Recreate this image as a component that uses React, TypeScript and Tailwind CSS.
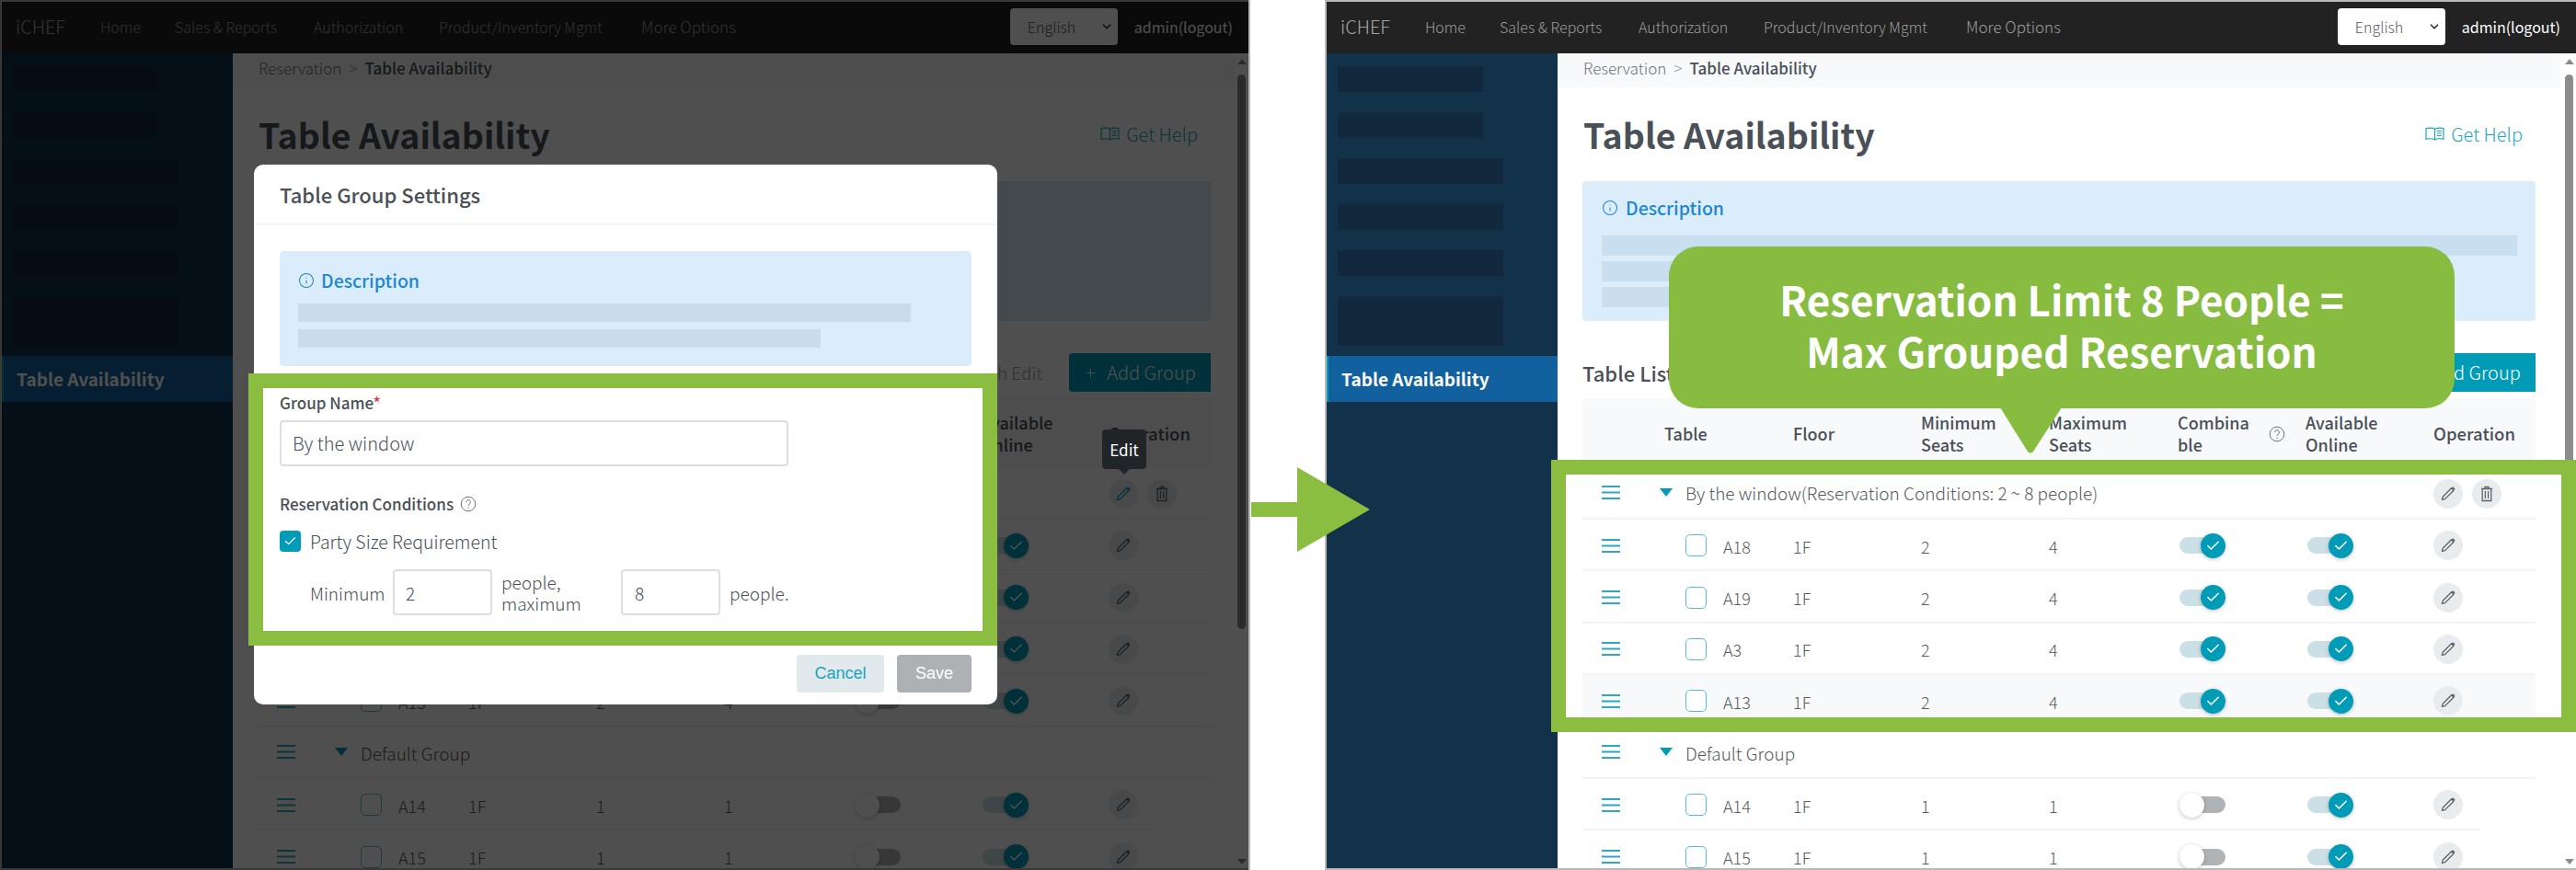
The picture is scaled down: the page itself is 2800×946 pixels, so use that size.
import { Check, ChevronDown, Info, Plus } from 'lucide-react'

const FONT = { fontFamily: '"Noto Sans CJK TC", "Noto Sans", sans-serif' }

const navItems = [
  { label: 'Home', width: 'w-[81px]' },
  { label: 'Sales & Reports', width: 'w-[151px]' },
  { label: 'Authorization', width: 'w-[136px]' },
  { label: 'Product/Inventory Mgmt', width: 'w-[220px]' },
]

const COLS = 'grid-cols-[112px_117px_139px_139px_140px_139px_139px_110px]'
const HEAD_COLS = 'grid-cols-[89px_140px_139px_139px_140px_139px_139px_110px]'

function DragIcon() {
  return (
    <svg width="20" height="15" viewBox="0 0 20 15" className="text-[#2fa8bf]">
      <path d="M0 1h20M0 7.500h20M0 14h20" stroke="currentColor" strokeWidth="2" />
    </svg>
  )
}

function PencilIcon({ active }: { active?: boolean }) {
  return (
    <svg width="18" height="18" viewBox="0 0 18 18" className={active ? 'text-[#0d9ab5]' : 'text-[#5f6368]'}>
      <path d="M3.200 12.200 12.600 2.800l2.400 2.400-9.400 9.400-3.200.8z" fill="none" stroke="currentColor" strokeWidth="1.300" strokeLinejoin="round" />
      <path d="M12.600 2.800l1.600-1.600 2.400 2.400L15 5.200z" fill="currentColor" />
    </svg>
  )
}

function TrashIcon() {
  return (
    <svg width="14" height="18" viewBox="0 0 14 18" className="text-[#5f6368]">
      <path d="M1 3.500h12M5 3.500V1.500h4v2M2.200 3.500v13h9.600v-13M5.400 6v8M8.600 6v8" fill="none" stroke="currentColor" strokeWidth="1.300" />
    </svg>
  )
}

function HelpCircle({ size = 18 }: { size?: number }) {
  return (
    <svg width={size} height={size} viewBox="0 0 18 18" className="text-[#6c757d]">
      <circle cx="9" cy="9" r="7.800" fill="none" stroke="currentColor" strokeWidth="1" />
      <path d="M6.600 7a2.400 2.400 0 1 1 3.600 2.100c-.8.5-1.200.9-1.200 1.900" fill="none" stroke="currentColor" strokeWidth="1" />
      <circle cx="9" cy="13.200" r=".7" fill="currentColor" />
    </svg>
  )
}

function BookIcon() {
  return (
    <svg width="21" height="16" viewBox="0 0 21 16" className="text-[#1ea7c0]">
      <path d="M10.500 2.500C8.500 1 4.500 1 1 1.600v11.600c3.500-.6 7.500-.6 9.500.8 2-1.400 6-1.400 9.500-.8V1.600C16.500 1 12.500 1 10.500 2.500zM10.500 2.500V14M12.800 4.500h5M12.800 7h5M12.800 9.500h5" fill="none" stroke="currentColor" strokeWidth="1.200" />
    </svg>
  )
}

function Toggle({ on }: { on: boolean }) {
  if (!on) {
    return (
      <div className="relative flex h-[27px] w-[50px] items-center">
        <div className="ml-[7px] h-[18px] w-[43px] rounded-full bg-[#b0b3b5]" />
        <div className="absolute left-0 top-0 h-[27px] w-[27px] rounded-full bg-white shadow-[0_1px_4px_rgba(0,0,0,0.25)]" />
      </div>
    )
  }
  return (
    <div className="relative flex h-[27px] w-[50px] items-center">
      <div className="h-[18px] w-[44px] rounded-full bg-[#cbe0e6]" />
      <div className="absolute right-0 top-0 flex h-[27px] w-[27px] items-center justify-center rounded-full bg-[#009cb7] shadow-[0_1px_4px_rgba(0,0,0,0.25)]">
        <Check size={17} strokeWidth={2.200} className="text-white" />
      </div>
    </div>
  )
}

function IconButton({ children }: { children: React.ReactNode }) {
  return <div className="flex h-[32px] w-[32px] items-center justify-center rounded-full bg-[#e9ecef]">{children}</div>
}

function GroupRow({ label, actions, activeEdit }: { label: string; actions?: boolean; activeEdit?: boolean }) {
  return (
    <div className="relative flex h-[56.400px] items-center border-b-2 border-[#f3f4f6] pl-[21px] text-[19px] font-light text-[#555b61]">
      <div className="w-[63px] leading-none"><DragIcon /></div>
      <div className="h-0 w-0 border-x-[7.500px] border-t-[9px] border-x-transparent border-t-[#009cb7]" />
      <span className={`ml-[14px] ${actions ? '' : 'pt-[3px]'}`}>{label}</span>
      {actions && (
        <div className="absolute left-[925px] top-[12px] flex gap-[10px]">
          <IconButton><PencilIcon active={activeEdit} /></IconButton>
          <IconButton><TrashIcon /></IconButton>
        </div>
      )}
    </div>
  )
}

function TableRow({ name, floor, min, max, combinable, hovered, short }: {
  name: string
  floor: string
  min: number
  max: number
  combinable: boolean
  hovered?: boolean
  short?: boolean
}) {
  return (
    <div className={`relative h-[56.400px] ${hovered ? 'bg-[#f8f9fa]' : ''}`}>
      <div className={`grid h-full ${COLS} items-center text-[18px] font-light text-[#555b61]`}>
        <div className="pl-[21px] leading-none"><DragIcon /></div>
        <div className="flex items-center">
          <div className="h-[24px] w-[23px] rounded-[5px] border-[1.500px] border-[#5cbccf] bg-white" />
          <span className="ml-[18px] pt-[2px]">{name}</span>
        </div>
        <span className="pt-[2px]">{floor}</span>
        <span className="pt-[2px]">{min}</span>
        <span className="pt-[2px]">{max}</span>
        <div className="pl-[2px]"><Toggle on={combinable} /></div>
        <div className="pl-[2px]"><Toggle on /></div>
        <div><IconButton><PencilIcon /></IconButton></div>
      </div>
      <div className={`absolute bottom-0 left-0 h-[2px] bg-[#f3f4f6] ${short ? 'w-[976px]' : 'w-full'}`} />
    </div>
  )
}

function Screen({ dimmed, children }: { dimmed?: boolean; children?: React.ReactNode }) {
  return (
    <div className="relative flex h-full flex-col overflow-hidden border-x-2 border-y-2 border-[#b9b9b9] border-r-0" style={FONT}>
      <header className="flex h-[56px] shrink-0 items-center bg-[#222222] pb-[3px] pl-[15px]">
        <span className="w-[92px] text-[20px] font-light text-[#a5a5a5]">iCHEF</span>
        {navItems.map(item => (
          <span key={item.label} className={`${item.width} text-[16px] font-light text-[#9d9d9d]`}>{item.label}</span>
        ))}
        <span className="text-[17px] font-light text-[#9d9d9d]">More Options</span>
        <div className="ml-auto flex items-center">
          <div className="flex h-[40px] w-[117px] items-center justify-between rounded-[4px] bg-white pl-[19px] pr-[5px] text-[16px] font-light text-[#555b61]">
            <span>English</span>
            <ChevronDown size={14} strokeWidth={3} className="text-[#333333]" />
          </div>
          <span className="ml-[18px] mr-[17px] text-[16px] text-white">admin(logout)</span>
        </div>
      </header>

      <div className="flex min-h-0 flex-1">
        <aside className="flex w-[251px] shrink-0 flex-col bg-[#12324a] pt-[14px]">
          <div className="ml-[12px] flex flex-col gap-[22px]">
            <div className="h-[28px] w-[158px] bg-[#12293d]" />
            <div className="h-[28px] w-[158px] bg-[#12293d]" />
            <div className="h-[28px] w-[180px] bg-[#12293d]" />
            <div className="h-[28px] w-[180px] bg-[#12293d]" />
            <div className="h-[28px] w-[180px] bg-[#12293d]" />
            <div className="h-[54px] w-[180px] bg-[#12293d]" />
          </div>
          <div className="mt-[11px] flex h-[50px] items-center border-l-2 border-[#0d9ab5] bg-[#12619f] pl-[14px] text-[19px] font-bold text-white">
            Table Availability
          </div>
        </aside>

        <div className="relative min-w-0 flex-1 bg-white">
          <div className="flex h-[37px] w-[1090px] items-center bg-[#f8f9fa] pb-[5px] pl-[28px] text-[17px] font-light text-[#6c757d]">
            Reservation
            <span className="mx-[8px] text-[#9aa0a6]">&gt;</span>
            <span className="font-medium text-[#495057]">Table Availability</span>
          </div>

          <div className="w-[1090px] px-[27px]">
            <div className="flex h-[102px] items-center justify-between">
              <h1 className="ml-[1px] text-[37.500px] font-bold text-[#495057]">Table Availability</h1>
              <div className="mr-[14px] flex items-center gap-[7px] text-[20px] font-light text-[#1ea7c0]">
                <BookIcon />
                Get Help
              </div>
            </div>

            <div className="h-[152px] rounded-[4px] bg-[#dbecfb] px-[21px] pt-[17px]">
              <div className="flex items-center gap-[8px] text-[19.500px] font-medium leading-[24px] text-[#1c87d2]">
                <Info size={18} strokeWidth={1.400} />
                Description
              </div>
              {!dimmed && (
                <div className="mt-[18px] flex flex-col gap-[6px]">
                  <div className="h-[22px] w-[995px] bg-[#c9dff0]" />
                  <div className="h-[22px] w-[400px] bg-[#c9dff0]" />
                  <div className="h-[22px] w-[400px] bg-[#c9dff0]" />
                </div>
              )}
            </div>

            <div className="mt-[35px] flex h-[42px] items-center justify-between">
              <h2 className="text-[22px] font-medium text-[#495057]">Table List</h2>
              <div className="flex items-center gap-[29px]">
                <span className="text-[19px] font-light text-[#9aa0a6]">Batch Edit</span>
                <div className="flex h-[42px] w-[154px] items-center justify-center gap-[10px] rounded-l-[4px] bg-[#009cb7] text-[20px] font-light text-white">
                  <Plus size={15} strokeWidth={1.500} />
                  Add Group
                </div>
              </div>
            </div>

            <div className="mt-[7px]">
              <div className={`grid h-[75.600px] ${HEAD_COLS} items-center bg-[#f8f9fa] text-[18px] font-medium leading-[24px] text-[#495057]`}>
                <span className="col-start-2">Table</span>
                <span>Floor</span>
                <span>Minimum<br />Seats</span>
                <span>Maximum<br />Seats</span>
                <div className="relative">
                  Combina<br />ble
                  <span className="absolute left-[99px] top-[16px]"><HelpCircle /></span>
                </div>
                <span>Available<br />Online</span>
                <span className="text-[18.500px]">Operation</span>
              </div>
              <GroupRow label="By the window(Reservation Conditions: 2 ~ 8 people)" actions activeEdit={dimmed} />
              <TableRow name="A18" floor="1F" min={2} max={4} combinable />
              <TableRow name="A19" floor="1F" min={2} max={4} combinable />
              <TableRow name="A3" floor="1F" min={2} max={4} combinable />
              <TableRow name="A13" floor="1F" min={2} max={4} combinable={!dimmed} hovered={!dimmed} />
              <GroupRow label="Default Group" />
              <TableRow name="A14" floor="1F" min={1} max={1} combinable={false} short />
              <TableRow name="A15" floor="1F" min={1} max={1} combinable={false} />
            </div>
          </div>

          <div className="absolute bottom-0 right-0 top-0 flex w-[15px] flex-col items-center bg-white pt-[6px]">
            <div className="h-0 w-0 border-x-[5px] border-b-[6px] border-x-transparent border-b-[#8c8c8c]" />
            <div className="mt-[11px] h-[603px] w-[9px] rounded-full bg-[#8c8c8c]" />
            <div className="mb-[4px] mt-auto h-0 w-0 border-x-[5px] border-t-[6px] border-x-transparent border-t-[#8c8c8c]" />
          </div>
        </div>
      </div>
      {children}
    </div>
  )
}

function TableGroupModal() {
  return (
    <div className="absolute left-[276px] top-[179px] h-[587px] w-[808px] rounded-[10px] bg-white" style={FONT}>
      <div className="flex h-[66px] items-center border-b-2 border-[#f3f4f6] pl-[28px] text-[22px] font-medium text-[#495057]">
        Table Group Settings
      </div>
      <div className="mx-[28px] mt-[28px] h-[125px] rounded-[4px] bg-[#dbecfb] px-[20px] pt-[20px]">
        <div className="flex items-center gap-[7px] text-[19.500px] font-medium leading-[24px] text-[#1c87d2]">
          <Info size={18} strokeWidth={1.400} />
          Description
        </div>
        <div className="mt-[13px] flex flex-col gap-[8px]">
          <div className="h-[20px] w-[666px] bg-[#c9dcea]" />
          <div className="h-[20px] w-[568px] bg-[#c9dcea]" />
        </div>
      </div>

      <div className="ml-[28px] mt-[28px] text-[17px] font-medium leading-[24px] text-[#495057]">
        Group Name<span className="text-[#e0343c]">*</span>
      </div>
      <div className="ml-[28px] mt-[7px] flex h-[50px] w-[553px] items-center rounded-[4px] border-2 border-[#dedede] pl-[12px] text-[20px] font-light text-[#495057]">
        By the window
      </div>

      <div className="ml-[28px] mt-[29px] flex items-center gap-[7px] text-[17px] font-medium leading-[24px] text-[#495057]">
        Reservation Conditions
        <HelpCircle />
      </div>
      <div className="ml-[28px] mt-[17px] flex items-center gap-[10px] text-[19.500px] font-light leading-[23px] text-[#495057]">
        <div className="flex h-[23px] w-[23px] items-center justify-center rounded-[4px] bg-[#009cb7]">
          <Check size={15} strokeWidth={2} className="text-white" />
        </div>
        Party Size Requirement
      </div>
      <div className="ml-[61px] mt-[19px] flex h-[50px] items-center text-[19px] font-light leading-[23px] text-[#495057]">
        <span className="w-[90px]">Minimum</span>
        <div className="flex h-[50px] w-[108px] items-center rounded-[4px] border-2 border-[#dedede] pl-[12px]">2</div>
        <span className="ml-[10px] w-[130px]">people,<br />maximum</span>
        <div className="flex h-[50px] w-[108px] items-center rounded-[4px] border-2 border-[#dedede] pl-[13px]">8</div>
        <span className="ml-[10px]">people.</span>
      </div>

      <div className="absolute bottom-[13px] right-[28px] flex gap-[14px] text-[18px]" style={{ fontFamily: '"Liberation Sans", sans-serif' }}>
        <div className="flex h-[41px] w-[95px] items-center justify-center rounded-[4px] bg-[#e1e9ec] text-[#17a5bf]">Cancel</div>
        <div className="flex h-[41px] w-[81px] items-center justify-center rounded-[4px] bg-[#aeb1b4] text-white">Save</div>
      </div>
    </div>
  )
}

export default function App() {
  return (
    <div className="relative flex h-[946px] w-[2800px] overflow-hidden bg-white">
      <div className="relative h-full w-[1359px] shrink-0 border-r-2 border-[#b9b9b9]">
        <Screen dimmed />
        <div className="absolute inset-0 bg-black/[0.69]" />
        <TableGroupModal />
        {/* tooltip for the hovered pencil */}
        <div className="absolute left-[1198px] top-[467px] flex h-[43px] w-[48px] items-center justify-center rounded-[4px] bg-[#212529] text-[17px] text-white" style={FONT}>
          Edit
          <div className="absolute -bottom-[6px] left-[18px] h-0 w-0 border-x-[6px] border-t-[6px] border-x-transparent border-t-[#212529]" />
        </div>
        <div className="pointer-events-none absolute left-[270px] top-[406px] h-[296px] w-[814px] border-[16px] border-[#8abd40]" />
      </div>

      <div className="relative ml-[81px] h-full w-[1360px] shrink-0">
        <Screen />
        <div className="absolute left-[246px] top-[500px] h-[296px] w-[1114px] border-[16px] border-[#8abd40]" />
        {/* callout */}
        <div className="absolute left-[374px] top-[268px] flex h-[176px] w-[854px] flex-col items-center justify-center rounded-[32px] bg-[#88bc41] pb-[6px] text-[44px] font-bold leading-[56px] text-white" style={FONT}>
          <span>Reservation Limit 8 People =</span>
          <span>Max Grouped Reservation</span>
          <svg width="68" height="51" viewBox="0 0 68 51" className="absolute left-[360px] top-[175px] text-[#88bc41]">
            <path d="M0 0h67L36 48q-3 3-6 0z" fill="currentColor" />
          </svg>
        </div>
      </div>

      {/* arrow between the two screens */}
      <svg width="130" height="92" viewBox="0 0 130 92" className="absolute left-[1360px] top-[508px] text-[#8abd40]">
        <path d="M0 38h50V0l79 46-79 46V54H0z" fill="currentColor" />
      </svg>
    </div>
  )
}
